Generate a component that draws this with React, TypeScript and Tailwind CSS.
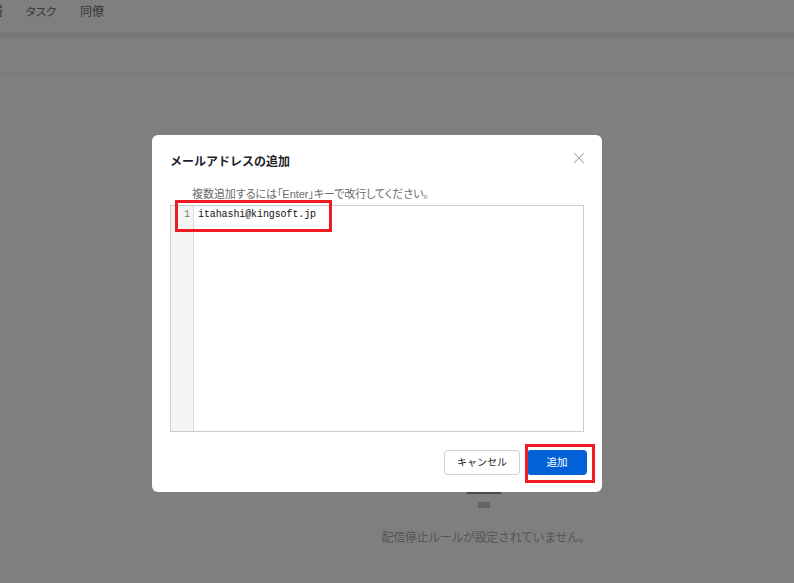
import React from 'react';
import { X } from 'lucide-react';

const FONT = "font-['Liberation_Sans','Noto_Sans_CJK_JP',sans-serif]";

const App: React.FC = () => {
  return (
    <div className={`relative w-[794px] h-[583px] overflow-hidden bg-white ${FONT}`}>
      {/* page behind the dialog */}
      <header className="h-[32px] flex items-start pt-[3px] text-[12px] leading-[18px] text-[#6f6f6f]">
        <span className="w-[3px] overflow-hidden whitespace-nowrap flex justify-end">
          <span className="shrink-0">署</span>
        </span>
        <span className="ml-[22px] text-[11.5px] tracking-[-1.2px]">タスク</span>
        <span className="ml-[24px]">同僚</span>
      </header>
      <div className="h-[6px] bg-[#f1f1f1]" />
      <div className="h-[36px] border-b border-[#f0f0f0]" />
      <div className="flex flex-col items-center pt-[418px] pl-[173px]">
        <div className="w-[34px] h-[2px] bg-[#8f949c]" />
        <div className="w-[12px] h-[6px] mt-[8px] bg-[#c4c8ce]" />
        <p className="mt-[21px] ml-[5px] text-[12px] tracking-[-0.35px] text-[#a8acb3]">配信停止ルールが設定されていません。</p>
      </div>

      {/* mask + dialog */}
      <div className="absolute inset-0 bg-black/50 pl-[152px] pt-[135px]">
        <div className="relative w-[450px] h-[357px] bg-white rounded-[6px] px-[18px] flex flex-col">
          <h2 className="mt-[18px] text-[12px] leading-[18px] font-bold text-[#1f1f2b]">メールアドレスの追加</h2>
          <button className="absolute top-[14px] right-[14px] text-[#a0a0a0]">
            <X size={18} strokeWidth={1.4} />
          </button>
          <p className="mt-[16px] pl-[22px] text-[11px] tracking-[-0.06px] leading-[14px] text-[#6b6b6b] [font-feature-settings:'palt']">
            複数追加するには「Enter」キーで改行してください。
          </p>
          <div className="mt-[4px] h-[227px] w-[414px] flex border border-[#cccccc]">
            <div className="w-[23px] bg-[#f5f5f5] border-r border-[#dddddd] pt-[2px] pr-[3px] text-right font-['Liberation_Mono',monospace] text-[10px] leading-[13px] text-[#777777]">
              1
            </div>
            <div className="pl-[4px] pt-[2px] font-['Liberation_Mono',monospace] text-[10px] tracking-[-0.1px] leading-[13px] text-[#111111]">
              itahashi@kingsoft.jp
            </div>
          </div>
          <div className="mt-[18px] -mr-[3px] flex justify-end gap-[7px]">
            <button className="w-[76px] h-[25px] rounded-[4px] border border-[#d0d0d0] bg-white text-[10px] text-[#222222]">キャンセル</button>
            <button className="w-[60px] h-[25px] rounded-[4px] bg-[#0062d6] text-[10.5px] text-white">追加</button>
          </div>
        </div>
      </div>

      {/* red annotations */}
      <div className="absolute left-[175px] top-[200px] w-[157px] h-[32px] border-[3px] border-[#ed1c24]" />
      <div className="absolute left-[525px] top-[444px] w-[70px] h-[39px] border-[3px] border-[#ed1c24]" />
    </div>
  );
};

export default App;
